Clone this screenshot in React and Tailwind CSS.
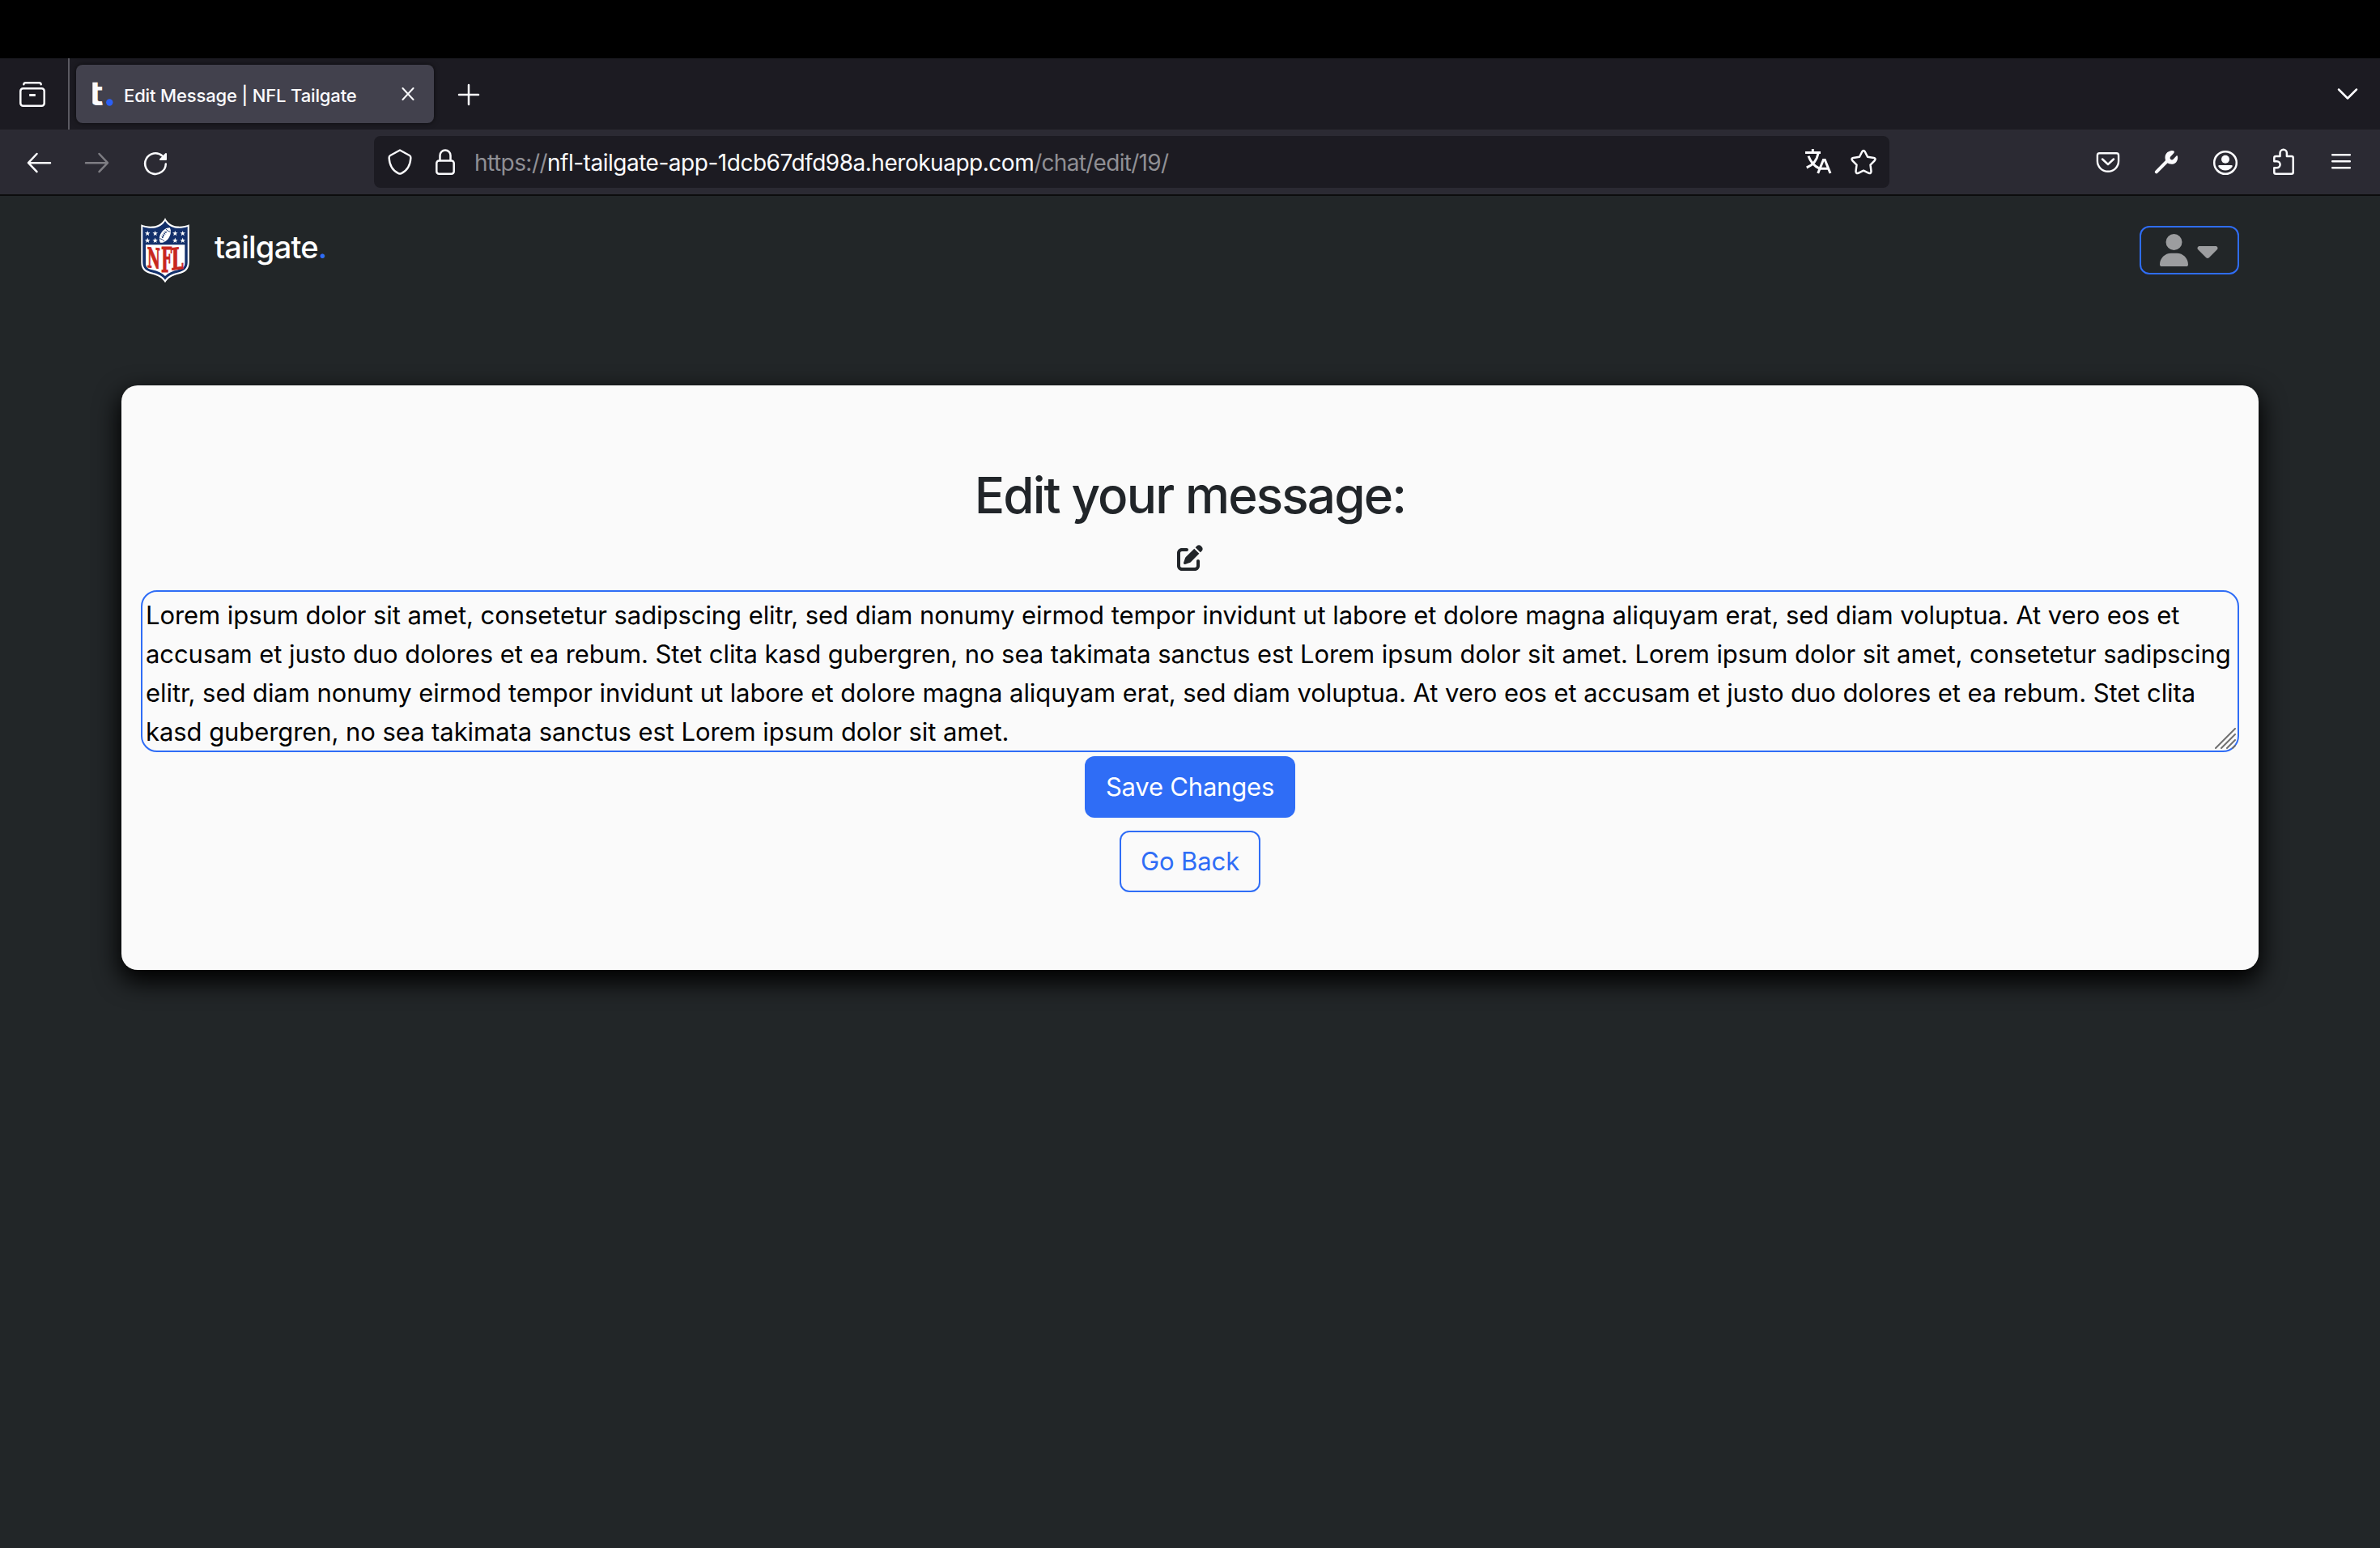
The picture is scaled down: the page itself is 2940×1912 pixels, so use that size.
import { FaUser, FaCaretDown, FaPenToSquare } from "react-icons/fa6";

const MESSAGE_LINES = [
  "Lorem ipsum dolor sit amet, consetetur sadipscing elitr, sed diam nonumy eirmod tempor invidunt ut labore et dolore magna aliquyam erat, sed diam voluptua. At vero eos et",
  "accusam et justo duo dolores et ea rebum. Stet clita kasd gubergren, no sea takimata sanctus est Lorem ipsum dolor sit amet. Lorem ipsum dolor sit amet, consetetur sadipscing",
  "elitr, sed diam nonumy eirmod tempor invidunt ut labore et dolore magna aliquyam erat, sed diam voluptua. At vero eos et accusam et justo duo dolores et ea rebum. Stet clita",
  "kasd gubergren, no sea takimata sanctus est Lorem ipsum dolor sit amet.",
];

/* 32px toolbar icon with the browser's line style */
function Icon({ children, className = "" }) {
  return (
    <svg
      viewBox="0 0 32 32"
      className={`h-8 w-8 shrink-0 overflow-visible ${className}`}
      fill="none"
      stroke="currentColor"
      strokeWidth="2.5"
      strokeLinecap="round"
      strokeLinejoin="round"
    >
      {children}
    </svg>
  );
}

function TabStrip() {
  return (
    <div className="flex h-[88px] items-center bg-[#1c1b22] text-[#fbfbfe]">
      <div className="flex h-full w-[86px] items-center border-r-2 border-[#5b5a62] pl-6">
        <Icon>
          <rect x="1.3" y="9.3" width="29.4" height="21.4" rx="3.2" />
          <path d="M5.3 4.2c.2-1.4 1-2 2.2-2h17c1.200 0 2 .6 2.200 2" />
          <path d="M12.200 17.500h7.600" strokeWidth="3" strokeLinecap="butt" />
        </Icon>
      </div>
      <div className="ml-2 flex h-[72px] w-[442px] items-center rounded-lg bg-[#42414d] pl-[18px] pr-6 shadow-[0_0_6px_rgba(0,0,0,0.6)]">
        <svg viewBox="0 0 32 32" className="h-8 w-8 shrink-0 overflow-visible">
          <clipPath id="favicon-clip">
            <rect x="2.3" y="0" width="30" height="32" />
          </clipPath>
          <g clipPath="url(#favicon-clip)">
            <text transform="translate(-3.700 29.600) scale(1.300 1)" className="font-['Inter']" fontSize="41" fontWeight="700" fill="#fbfbfe">t</text>
          </g>
          <circle cx="23.300" cy="26.500" r="4.200" fill="#2b5ff6" />
        </svg>
        <span className="ml-[9px] pt-1 text-[22px] font-medium tracking-[-0.14px] whitespace-nowrap">Edit Message | NFL Tailgate</span>
        <svg viewBox="0 0 16 16" className="ml-auto h-4 w-4" stroke="currentColor" strokeWidth="2" strokeLinecap="round">
          <path d="M1.500 1l13 14M14.500 1l-13 14" />
        </svg>
      </div>
      <Icon className="ml-[27px]">
        <path d="M16 5v24M4 17h24" />
      </Icon>
      <Icon className="mr-6 ml-auto">
        <path d="M5 10.500l11 11 11-11" />
      </Icon>
    </div>
  );
}

function Toolbar() {
  return (
    <div className="flex h-[82px] items-center border-b-2 border-[#0c0c0d] bg-[#2b2a33] px-8 text-[#fbfbfe]">
      <div className="flex gap-10">
        <Icon>
          <path d="M30 17.200H3.500M13.500 6L3 17.200l10.500 11" />
        </Icon>
        <Icon className="text-[#7e7d83]">
          <path d="M2 17.200h26.500M18.500 6L29 17.200l-10.500 11" />
        </Icon>
        <Icon>
          <path d="M28.800 18.500A12.800 12.800 0 1 1 24.500 8.500" />
          <path d="M22 13h7V6z" fill="currentColor" strokeWidth="2" />
        </Icon>
      </div>

      <div className="ml-[254px] flex h-16 w-[1872px] items-center rounded-lg bg-[#1c1b22] px-4">
        <Icon>
          <path d="M16 1.500L28.500 8c1.200.7 1.700 1.600 1.600 3-.6 9-4.600 16-12.600 19.300-1 .4-2 .4-3 0C6.500 27 2.500 20 1.900 11c-.1-1.400.4-2.300 1.600-3z" transform="translate(.8 0) scale(.95 1)" />
        </Icon>
        <Icon className="ml-6">
          <path d="M9.500 14V8a6.500 6.500 0 0 1 13 0v6" />
          <rect x="5.300" y="14.500" width="21.400" height="16.200" rx="3" />
        </Icon>
        <div className="ml-5 flex pt-px text-[28px] whitespace-nowrap text-[#8f8f94]">
          <span className="tracking-[-0.55px]">https://</span>
          <span className="tracking-[-0.48px] text-[#fbfbfe]">nfl-tailgate-app-1dcb67dfd98a.herokuapp.com</span>
          <span className="tracking-[-0.7px]">/chat/edit/19/</span>
        </div>
        <Icon className="mr-6 ml-auto">
          <g strokeLinecap="butt" strokeLinejoin="miter" strokeWidth="3">
            <path d="M0 4.500h19M9.300 0v4.500M16 5.500c-1.600 8.500-6.500 14.500-14.300 17.500M4 8.700c2.500 7 6.500 12 13.500 15.500" />
            <path d="M15.700 30l6.700-16.500h1.900L31 30M18.300 24.300h10.200" />
          </g>
        </Icon>
        <Icon>
          <path d="M14.300 3.300Q16 .9 17.700 3.300L21 9.700l7.700 1.200q3 .9 1 3.400l-5.200 5.300 1 8q0 3-3 2.200L16 26.700l-6.500 3.100q-3 .8-3-2.200l1-8-5.200-5.300q-2-2.500 1-3.400L11 9.700z" />
        </Icon>
      </div>

      <div className="ml-auto flex gap-10">
        <Icon>
          <path d="M5 5.300h22q2.700 0 2.700 2.700v7a13.700 12.800 0 0 1-27.400 0V8q0-2.700 2.700-2.700z" transform="translate(.7 0) scale(.955 1)" />
          <path d="M9 12.500l7 6.500 7-6.500" />
        </Icon>
        <Icon>
          <path d="M3.800 28.300L17 15" strokeWidth="4" />
          <path d="M24.500 2.300a8.300 8.300 0 0 0-10 8.500c0 5 3.500 8 8 8 4.500 0 8-3.500 7.600-8.800-.1-1.500-.8-2.200-1.800-1.200l-4 4.200q-1.500 1-3-.3t-.3-3l4.200-4.500c1.200-1.300.8-2.800-.7-2.900z" fill="currentColor" stroke="none" />
        </Icon>
        <Icon>
          <circle cx="17" cy="17" r="13.800" />
          <circle cx="17" cy="12.700" r="5" fill="currentColor" stroke="none" />
          <path d="M9.500 20h15c1.200 0 1.600 1 1 1.900a10.300 10.300 0 0 1-17 0c-.6-.9-.2-1.900 1-1.900z" fill="currentColor" stroke="none" />
        </Icon>
        <Icon>
          <path d="M5.300 15.300V11q0-2 2-2h5.200V5a4.200 4.200 0 0 1 8.400 0v4H26.700q2 0 2 2v17.700q0 2-2 2H7.300q-2 0-2-2v-5.400h3.300a4 4 0 0 0 0-8z" />
        </Icon>
        <Icon>
          <path d="M5.200 7.300h21.600M5.200 15.300h21.600M5.200 23.300h21.600" />
        </Icon>
      </div>
    </div>
  );
}

const STARS = [
  [8.200, 19.300],
  [17.700, 19.300],
  [42.300, 19.300],
  [51.700, 19.300],
  [8.200, 28],
  [17.700, 28],
  [42.300, 28],
  [51.700, 28],
];

function NflShield() {
  return (
    <svg viewBox="0 0 60 80" className="h-20 w-[60px] shrink-0 overflow-visible">
      <path d="M30 0C27.500 6 22 10 15 10.600 9.500 11 4 10 .3 8.300V55c0 9 5 12.500 13 14.500 8 2 13.500 5 16.700 10.800 3.200-5.800 8.700-8.800 16.700-10.800 8-2 13-5.500 13-14.500V8.300C56 10 50.500 11 45 10.600 38 10 32.500 6 30 0z" fill="#fff" />
      <path d="M30 4C27 9 22 12.300 15.500 12.700 10.500 13 6 12.300 2.300 11v44c0 7.500 4.500 10.700 11.700 12.500C21.500 69.500 27 72 30 76.800c3-4.800 8.500-7.300 16-9.300 7.200-1.800 11.700-5 11.700-12.500V11c-3.700 1.300-8.200 2-13.200 1.700C38 12.300 33 9 30 4z" fill="#13306b" />
      <path d="M6 33.300h48.300V56c0 5-3 7-8.300 8.300-7 1.700-12 3.700-16 7.700-4-4-9-6-16-7.700C8.500 63 6 61 6 56z" fill="#fff" />
      {STARS.map(([x, y]) => (
        <path
          key={`${x}-${y}`}
          transform={`translate(${x} ${y})`}
          d="M0-3.400L.85-1.100 3.300-1 1.350.5 2 2.900 0 1.500-2 2.900-1.350.5-3.300-1-.85-1.100z"
          fill="#fff"
        />
      ))}
      <g transform="translate(29.900 21.500) rotate(-58)">
        <path d="M-11 0C-7-7.500 7-7.500 11 0 7 7.500-7 7.500-11 0z" fill="#fff" />
        <path d="M-5-1.200Q0-2.200 5-1.200M-3.500-3v3M-1.200-3.300v3M1.200-3.300v3M3.500-3v3M-7-3.500Q-5.500 0-7 3.500M7-3.500Q5.500 0 7 3.500" stroke="#13306b" strokeWidth=".8" fill="none" />
      </g>
      <g fill="#c8281e" stroke="#c8281e" strokeWidth="1" fontWeight="700" className="font-['DejaVu_Serif']">
        <text transform="translate(7.800 61) skewY(6)" fontSize="34" textLength="16.200" lengthAdjust="spacingAndGlyphs">N</text>
        <text transform="translate(25 67.200)" fontSize="42" textLength="13.500" lengthAdjust="spacingAndGlyphs">F</text>
        <text transform="translate(37.600 64.500) skewY(-7)" fontSize="37" textLength="15.200" lengthAdjust="spacingAndGlyphs">L</text>
      </g>
    </svg>
  );
}

function Navbar() {
  return (
    <nav className="flex h-[138px] items-center px-[174px] pb-1">
      <NflShield />
      <span className="-mt-2 ml-[31px] text-[38px] font-medium tracking-[-0.75px] text-white">
        tailgate<span className="text-[#2f6df6]">.</span>
      </span>
      <button className="ml-auto flex h-[60px] w-[123px] items-center justify-center rounded-xl border-2 border-[#2f6df6] text-[#9c9d9f]">
        <FaUser className="h-10 w-[35px]" />
        <FaCaretDown className="ml-[10px] h-10 w-[28px]" />
      </button>
    </nav>
  );
}

function EditCard() {
  return (
    <main className="mx-[150px] mt-24 flex h-[722px] flex-col items-center rounded-[20px] bg-[#fafafa] px-6 shadow-[0_12px_30px_3px_#000]">
      <h2 className="mt-[97px] h-[78px] text-[62px] leading-[78px] font-medium tracking-[-1.85px] text-[#212529]">Edit your message:</h2>
      <FaPenToSquare className="mt-[22px] h-8 w-8 text-[#212529]" />
      <div className="relative mt-6 h-[200px] w-full rounded-[20px] border-2 border-[#2f6df6] pt-[5px] pl-1 text-[31px] leading-[48px] tracking-[-0.07px] whitespace-nowrap text-black">
        {MESSAGE_LINES.map((line) => (
          <p key={line}>{line}</p>
        ))}
        <svg viewBox="0 0 26 26" className="absolute right-[2px] bottom-[2px] h-[26px] w-[26px]" stroke="#707070" strokeWidth="2" strokeLinecap="round">
          <path d="M1 25L25 1M8 25L25 8M15 25l10-10M22 25l3-3" />
        </svg>
      </div>
      <button className="mt-[5px] h-[76px] w-[260px] rounded-xl bg-[#2f6df6] pt-px text-[31px] tracking-[-0.2px] text-white">Save Changes</button>
      <button className="mt-4 h-[76px] w-[174px] rounded-xl border-2 border-[#2f6df6] pt-px text-[31px] tracking-[-0.1px] text-[#2f6df6]">Go Back</button>
    </main>
  );
}

export default function App() {
  return (
    <div className="h-[1912px] w-[2940px] overflow-hidden bg-[#222628] font-['Inter',sans-serif]">
      <div className="h-[72px] bg-black" />
      <TabStrip />
      <Toolbar />
      <Navbar />
      <EditCard />
    </div>
  );
}
